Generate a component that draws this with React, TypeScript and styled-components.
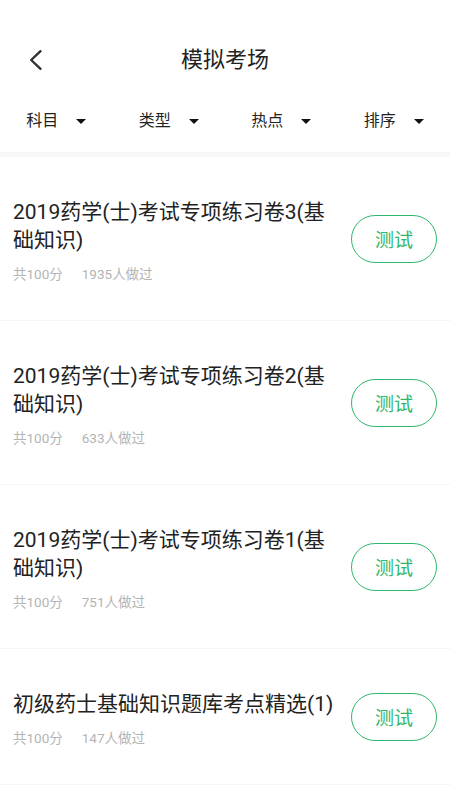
import styled, { createGlobalStyle } from 'styled-components'

const GlobalStyle = createGlobalStyle`
  html, body {
    margin: 0;
    padding: 0;
    background: #fff;
  }
  body {
    font-family: Roboto, "Noto Sans CJK SC", sans-serif;
    color: #222;
  }
`

const Page = styled.div`
  width: 450px;
  min-height: 800px;
  padding-top: 30px;
  background: #fff;
  overflow: hidden;
`

const NavBar = styled.header`
  display: grid;
  grid-template-columns: 1fr auto 1fr;
  align-items: center;
  height: 60px;
`

const BackButton = styled.button`
  justify-self: start;
  display: flex;
  align-items: center;
  padding: 0 0 0 29px;
  border: none;
  background: none;
  height: 100%;
  cursor: pointer;
`

const NavTitle = styled.h1`
  margin: 0;
  font-size: 22px;
  font-weight: 400;
  line-height: 30px;
  color: #222;
`

const FilterBar = styled.nav`
  display: grid;
  grid-template-columns: repeat(4, 1fr);
  align-items: center;
  height: 62px;
`

const FilterItem = styled.div`
  display: flex;
  justify-content: center;
  align-items: center;
  gap: 18px;
  font-size: 16px;
  color: #222;
  line-height: 22px;
`

const Divider = styled.div`
  height: 5px;
  background: #f7f7f7;
`

const List = styled.ul`
  margin: 0;
  padding: 0;
  list-style: none;
`

const Row = styled.li`
  display: flex;
  align-items: center;
  gap: 16px;
  padding: 0 13px;
  border-bottom: 1px solid #f5f5f5;
`

const Info = styled.div`
  flex: 1;
  min-width: 0;
  padding: 41px 0 37px;
`

const Title = styled.div`
  font-size: 21px;
  line-height: 28px;
  color: #222;
`

const Meta = styled.div`
  display: flex;
  gap: 19px;
  margin-top: 11px;
  font-size: 13.5px;
  line-height: 18px;
  color: #b4b4b4;
`

const TestButton = styled.button`
  flex: none;
  width: 86px;
  height: 48px;
  border: 1.5px solid #2fb76b;
  border-radius: 24px;
  background: #fff;
  color: #2fb76b;
  font-family: inherit;
  font-size: 19px;
  cursor: pointer;
`

const Caret = () => (
  <svg width="10" height="5" viewBox="0 0 10 5">
    <path d="M0 0h10L5 5z" fill="#111" />
  </svg>
)

const filters = ['科目', '类型', '热点', '排序']

const papers = [
  { title: '2019药学(士)考试专项练习卷3(基础知识)', score: 100, done: 1935 },
  { title: '2019药学(士)考试专项练习卷2(基础知识)', score: 100, done: 633 },
  { title: '2019药学(士)考试专项练习卷1(基础知识)', score: 100, done: 751 },
  { title: '初级药士基础知识题库考点精选(1)', score: 100, done: 147 },
]

export default function App() {
  return (
    <Page>
      <GlobalStyle />
      <NavBar>
        <BackButton aria-label="返回">
          <svg width="13" height="20" viewBox="0 0 13 20">
            <path
              d="M11.5 1.2L2.2 10l9.3 8.8"
              fill="none"
              stroke="#333"
              strokeWidth="2.4"
              strokeLinecap="round"
              strokeLinejoin="round"
            />
          </svg>
        </BackButton>
        <NavTitle>模拟考场</NavTitle>
        <span />
      </NavBar>
      <FilterBar>
        {filters.map((f) => (
          <FilterItem key={f}>
            {f}
            <Caret />
          </FilterItem>
        ))}
      </FilterBar>
      <Divider />
      <List>
        {papers.map((p) => (
          <Row key={p.title}>
            <Info>
              <Title>{p.title}</Title>
              <Meta>
                <span>共{p.score}分</span>
                <span>{p.done}人做过</span>
              </Meta>
            </Info>
            <TestButton>测试</TestButton>
          </Row>
        ))}
      </List>
    </Page>
  )
}
